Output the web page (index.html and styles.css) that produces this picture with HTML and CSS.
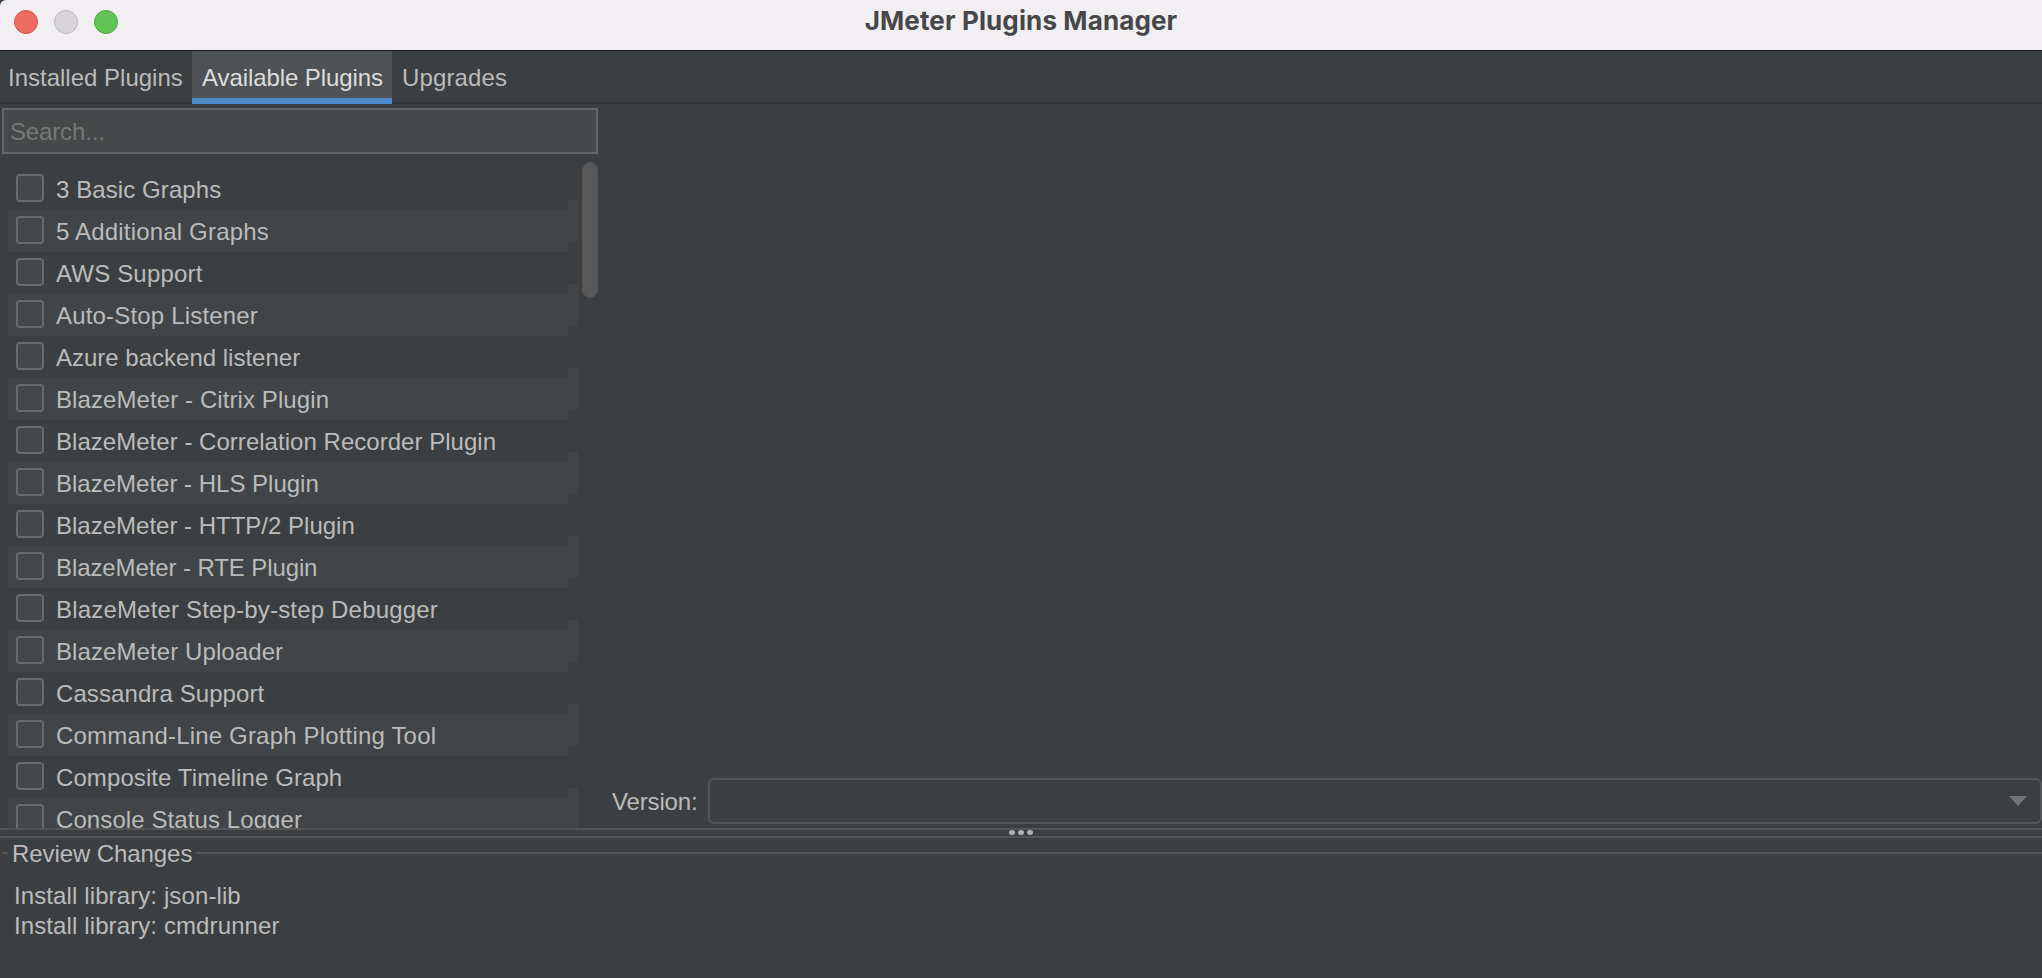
FILE: index.html
```html
<!DOCTYPE html>
<html lang="en">
<head>
<meta charset="utf-8">
<title>JMeter Plugins Manager</title>
<link rel="stylesheet" href="styles.css">
</head>
<body>
<div class="window">
  <header class="titlebar">
    <div class="lights"><i class="light red"></i><i class="light gray"></i><i class="light green"></i></div>
    <h1 class="title">JMeter Plugins Manager</h1>
  </header>
  <nav class="tabs">
    <div class="tab installed"><span>Installed Plugins</span></div>
    <div class="tab selected"><span>Available Plugins</span></div>
    <div class="tab upgrades"><span>Upgrades</span></div>
  </nav>
  <main class="main">
    <section class="left">
      <div class="search">Search...</div>
      <div class="listwrap">
        <ul class="list">
          <li class="row wide"><i class="check"></i><span>3 Basic Graphs</span></li>
          <li class="row wider"><i class="check"></i><span>5 Additional Graphs</span></li>
          <li class="row wider"><i class="check"></i><span>AWS Support</span></li>
          <li class="row wider"><i class="check"></i><span>Auto-Stop Listener</span></li>
          <li class="row"><i class="check"></i><span>Azure backend listener</span></li>
          <li class="row wide"><i class="check"></i><span>BlazeMeter - Citrix Plugin</span></li>
          <li class="row slight"><i class="check"></i><span>BlazeMeter - Correlation Recorder Plugin</span></li>
          <li class="row"><i class="check"></i><span>BlazeMeter - HLS Plugin</span></li>
          <li class="row"><i class="check"></i><span>BlazeMeter - HTTP/2 Plugin</span></li>
          <li class="row tight"><i class="check"></i><span>BlazeMeter - RTE Plugin</span></li>
          <li class="row wider"><i class="check"></i><span>BlazeMeter Step-by-step Debugger</span></li>
          <li class="row wide"><i class="check"></i><span>BlazeMeter Uploader</span></li>
          <li class="row wide"><i class="check"></i><span>Cassandra Support</span></li>
          <li class="row wider"><i class="check"></i><span>Command-Line Graph Plotting Tool</span></li>
          <li class="row wide"><i class="check"></i><span>Composite Timeline Graph</span></li>
          <li class="row wide"><i class="check"></i><span>Console Status Logger</span></li>
        </ul>
        <div class="scroll"></div>
      </div>
    </section>
    <section class="right">
      <label class="version">Version:</label>
      <div class="combo"><svg width="18" height="10" viewBox="0 0 18 10"><path d="M0 0H18L9 10Z" fill="#747474"/></svg></div>
    </section>
  </main>
  <div class="divider"><i></i><i></i><i></i></div>
  <footer class="review">
    <div class="legend"><span>Review Changes</span></div>
    <div class="changes"><p>Install library: json-lib</p><p>Install library: cmdrunner</p></div>
  </footer>
</div>
</body>
</html>
```

FILE: styles.css
```css
* { box-sizing: border-box; }
body { margin: 0; background: #3c3f41; }
.window {
  width: 2042px; height: 978px; overflow: hidden;
  display: flex; flex-direction: column;
  background: #3c3f41; color: #bbbbbb;
  font: 24px/28px "Liberation Sans", Arial, sans-serif;
  white-space: nowrap;
}
.titlebar {
  height: 51px; flex: none; background: #f1eff2;
  border-bottom: 1px solid #161718;
  display: grid; grid-template-columns: 1fr auto 1fr;
  border-top-left-radius: 6px;
}
.lights { display: flex; gap: 16px; padding: 10px 0 0 14px; }
.light { width: 24px; height: 24px; border-radius: 50%; border: 1px solid; }
.red { background: #ed6b60; border-color: #d5534a; }
.gray { background: #d8d6d9; border-color: #b9b7ba; }
.green { background: #62c555; border-color: #4ba73f; }
.title {
  margin: 0; padding-top: 5px; color: #474648;
  font: 700 26px/32px Inter, sans-serif; letter-spacing: 0.12px;
}
.tabs { height: 53px; flex: none; display: flex; border-bottom: 2px solid #323537; }
.tab { height: 53px; padding: 13px 8px 0; }
.installed { width: 192px; }
.selected {
  width: 200px; padding-left: 10px; background: #4e5254; color: #dddddd;
  border-bottom: 6px solid #4a88c7; letter-spacing: -0.08px;
}
.upgrades { padding-left: 10px; letter-spacing: 0.15px; }
.main { height: 724px; flex: none; display: flex; }
.left { width: 600px; padding: 4px 2px 0; display: flex; flex-direction: column; }
.search {
  height: 46px; width: 596px; flex: none; border: 2px solid #646464;
  background: #45494a; color: #777777; padding: 8px 6px; letter-spacing: -0.15px;
}
.listwrap { height: 674px; overflow: hidden; display: flex; justify-content: space-between; padding: 8px 0 0 6px; }
.list { list-style: none; margin: 0; padding: 6px 0 0; width: 570px; }
.row {
  height: 42px; width: 560px; position: relative;
  display: flex; gap: 12px; padding: 6px 0 0 8px;
}
.row span { padding-top: 2px; }
.tight { letter-spacing: -0.1px; }
.slight { letter-spacing: 0.03px; }
.wide { letter-spacing: 0.09px; }
.wider { letter-spacing: 0.18px; }
.row:nth-child(even) { background: #414547; }
.row:nth-child(even)::after {
  content: ""; position: absolute; left: 560px; top: -10px;
  width: 10px; height: 42px; background: #414547;
}
.check {
  width: 28px; height: 28px; flex: none;
  border: 2px solid #6b6b6b; border-radius: 4px; background: #43494a;
}
.scroll { width: 16px; height: 136px; border-radius: 8px; background: #59595a; border: 1px solid #505253; }
.right { flex: 1; display: flex; align-items: flex-end; padding: 0 0 4px 12px; }
.version { width: 96px; height: 46px; padding-top: 10px; letter-spacing: -0.16px; }
.combo {
  flex: 1; height: 46px; border: 2px solid #555555; border-radius: 6px;
  display: flex; justify-content: flex-end; padding: 16px 13px 0 0;
}
.divider {
  height: 10px; flex: none; border: solid #555555; border-width: 2px 0;
  display: flex; justify-content: center; gap: 3px;
}
.divider i { width: 6px; height: 5px; border-radius: 50%; background: #afb1b3; }
.legend { display: flex; align-items: center; height: 30px; padding-left: 2px; }
.legend::before { content: ""; width: 6px; height: 2px; background: #555555; }
.legend::after { content: ""; flex: 1; height: 2px; background: #555555; }
.legend span { width: 188px; padding: 2px 0 0 4px; letter-spacing: -0.08px; }
.changes { padding: 13px 0 0 14px; letter-spacing: 0.11px; }
.changes p { margin: 0; line-height: 30px; }
```
